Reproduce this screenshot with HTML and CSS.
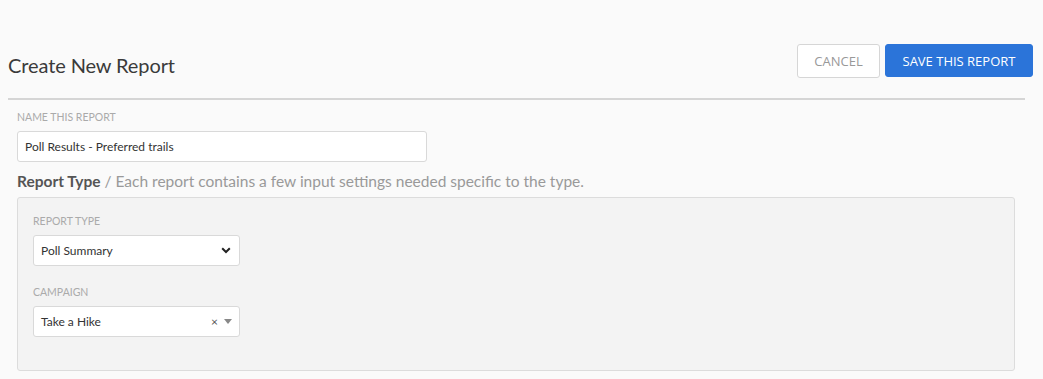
FILE: index.html
```html
<!DOCTYPE html>
<html>
<head>
<meta charset="utf-8">
<link rel="stylesheet" href="styles.css">
</head>
<body>
<div class="page">
  <header class="header">
    <h1 class="title">Create New Report</h1>
    <div class="actions">
      <button class="btn btn-cancel">CANCEL</button>
      <button class="btn btn-save">SAVE THIS REPORT</button>
    </div>
  </header>
  <div class="rule"></div>
  <div class="form">
    <label class="label">NAME THIS REPORT</label>
    <div class="input name-input">Poll Results - Preferred trails</div>
    <p class="section-title"><strong>Report Type</strong> / Each report contains a few input settings needed specific to the type.</p>
    <div class="panel">
      <label class="label">REPORT TYPE</label>
      <div class="input select">
        <span>Poll Summary</span>
        <svg class="chev" width="10" height="7" viewBox="0 0 10 7"><path d="M1.2 1.3 L5 5 L8.8 1.3" fill="none" stroke="#222" stroke-width="2"/></svg>
      </div>
      <label class="label label-campaign">CAMPAIGN</label>
      <div class="input select">
        <span>Take a Hike</span>
        <span class="ctrls"><span class="clear">×</span><svg width="8" height="5" viewBox="0 0 8 5"><path d="M0 0 H8 L4 5 Z" fill="#888"/></svg></span>
      </div>
    </div>
  </div>
</div>
</body>
</html>
```
FILE: styles.css
```css
* { box-sizing: border-box; }
html, body { margin: 0; padding: 0; }
body {
  background: #fafafa;
  font-family: "Lato", "Noto Sans", sans-serif;
  color: #333;
  width: 1043px;
  height: 379px;
  overflow: hidden;
}
.page { padding: 44px 10px 0 8px; }
.header {
  display: flex;
  justify-content: space-between;
  align-items: flex-start;
  height: 54px;
}
.title {
  margin: 9px 0 0 0;
  font-weight: 400;
  font-size: 20px;
  color: #3a3a3a;
  letter-spacing: -0.1px;
}
.actions { display: flex; gap: 5px; }
.btn {
  font-family: "Open Sans", sans-serif;
  font-size: 13px;
  height: 34px;
  border-radius: 3px;
  padding: 0 16px;
  cursor: pointer;
}
.btn-cancel {
  width: 83px;
  background: #fff;
  border: 1px solid #d6d6d6;
  color: #999;
}
.btn-save {
  width: 148px;
  height: 33px;
  background: #2b74d9;
  border: 1px solid #2b74d9;
  color: #fff;
}
.rule {
  height: 2px;
  background: #d5d5d5;
  width: 1017px;
}
.form { padding: 11px 18px 0 9px; }
.label {
  display: block;
  font-size: 10.5px;
  color: #aaa;
  line-height: 12px;
}
.input {
  background: #fff;
  border: 1px solid #d9d9d9;
  border-radius: 3px;
  height: 31px;
  font-size: 12px;
  color: #333;
  display: flex;
  align-items: center;
  padding: 0 7px;
}
.name-input { width: 410px; margin-top: 8px; }
.section-title {
  margin: 9px 0 0 0;
  font-size: 15.5px;
  color: #999;
  line-height: 20px;
}
.section-title strong { color: #555; font-weight: 700; }
.panel {
  margin-top: 6px;
  background: #f3f3f3;
  border: 1px solid #dcdcdc;
  border-radius: 3px;
  height: 174px;
  padding: 17px 15px;
}
.panel .label { margin-bottom: 8px; }
.select {
  width: 207px;
  justify-content: space-between;
}
.chev { margin-right: 1px; }
.label-campaign { margin-top: 20px; }
.ctrls { display: flex; align-items: center; gap: 6px; color: #555; }
.clear { font-size: 12px; }
```
